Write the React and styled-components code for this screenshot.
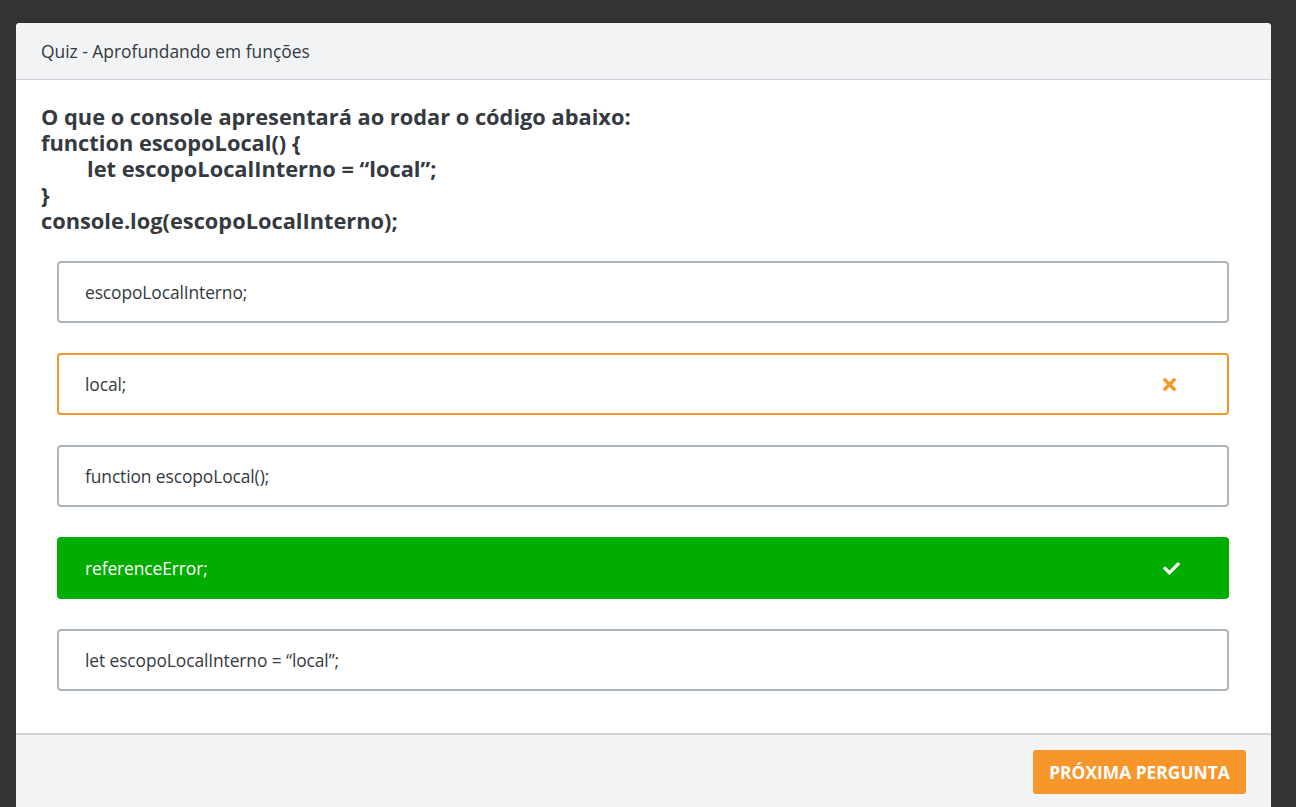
import styled, { createGlobalStyle } from 'styled-components';
import { FaTimes, FaCheck } from 'react-icons/fa';

const Global = createGlobalStyle`
  html, body {
    margin: 0;
    padding: 0;
    background: #333333;
    font-family: "Open Sans", "Noto Sans", sans-serif;
    overflow: hidden;
  }
`;

const options = [
  { text: 'escopoLocalInterno;', state: 'idle' },
  { text: 'local;', state: 'wrong' },
  { text: 'function escopoLocal();', state: 'idle' },
  { text: 'referenceError;', state: 'right' },
  { text: 'let escopoLocalInterno = “local”;', state: 'idle' },
];

export default function App() {
  return (
    <Page>
      <Global />
      <Modal>
        <Header>Quiz - Aprofundando em funções</Header>
        <Body>
          <Question>
            <Line>O que o console apresentará ao rodar o código abaixo:</Line>
            <Line>function escopoLocal() {'{'}</Line>
            <Line indent>let escopoLocalInterno = “local”;</Line>
            <Line>{'}'}</Line>
            <Line>console.log(escopoLocalInterno);</Line>
          </Question>
          <Options>
            {options.map((o) => (
              <Option key={o.text} state={o.state}>
                <span>{o.text}</span>
                {o.state === 'wrong' && (
                  <Icon>
                    <FaTimes size={19} />
                  </Icon>
                )}
                {o.state === 'right' && (
                  <Icon shift>
                    <FaCheck size={17} />
                  </Icon>
                )}
              </Option>
            ))}
          </Options>
        </Body>
        <Footer>
          <NextButton>PRÓXIMA PERGUNTA</NextButton>
        </Footer>
      </Modal>
    </Page>
  );
}

const Page = styled.div`
  height: 807px;
  padding: 23px 25px 0 16px;
  box-sizing: border-box;
`;

const Modal = styled.div`
  background: #ffffff;
  border-radius: 4px;
  overflow: hidden;
  height: 800px;
`;

const Header = styled.div`
  height: 56px;
  display: flex;
  align-items: center;
  padding: 0 25px;
  background: #f2f3f5;
  border-bottom: 1px solid #cfd2d6;
  color: #343a40;
  font-size: 17.4px;
`;

const Body = styled.div`
  padding: 24px 25px 12px;
`;

const Question = styled.div`
  font-weight: 700;
  font-size: 21.8px;
  color: #343a40;
`;

const Line = styled.div`
  height: 26px;
  line-height: 26px;
  padding-left: ${({ indent }) => (indent ? '46px' : '0')};
`;

const Options = styled.div`
  display: flex;
  flex-direction: column;
  gap: 30px;
  padding: 27px 17px 30px 16px;
`;

const Option = styled.div`
  display: flex;
  align-items: center;
  justify-content: space-between;
  height: 62px;
  box-sizing: border-box;
  padding: 0 48px 0 26px;
  border-radius: 4px;
  border: 2px solid
    ${({ state }) =>
      state === 'wrong' ? '#f7962b' : state === 'right' ? '#00ad00' : '#adb5bd'};
  background: ${({ state }) => (state === 'right' ? '#00ad00' : '#ffffff')};
  color: ${({ state }) => (state === 'right' ? '#ffffff' : '#343a40')};
  font-size: 17.4px;
  letter-spacing: -0.1px;

  svg {
    color: ${({ state }) => (state === 'right' ? '#ffffff' : '#f7962b')};
  }
`;

const Icon = styled.span`
  display: flex;
  justify-content: center;
  width: 20px;
  margin-right: ${({ shift }) => (shift ? '-2px' : '0')};
`;

const Footer = styled.div`
  background: #f2f3f5;
  border-top: 2px solid #cfd2d6;
  display: flex;
  justify-content: flex-end;
  padding: 15px 25px;
  height: 100px;
`;

const NextButton = styled.button`
  height: 44px;
  width: 213px;
  border: none;
  border-radius: 3px;
  background: #f7962b;
  color: #ffffff;
  font-family: "Open Sans", "Noto Sans", sans-serif;
  font-weight: 700;
  font-size: 17.4px;
  cursor: pointer;
`;
